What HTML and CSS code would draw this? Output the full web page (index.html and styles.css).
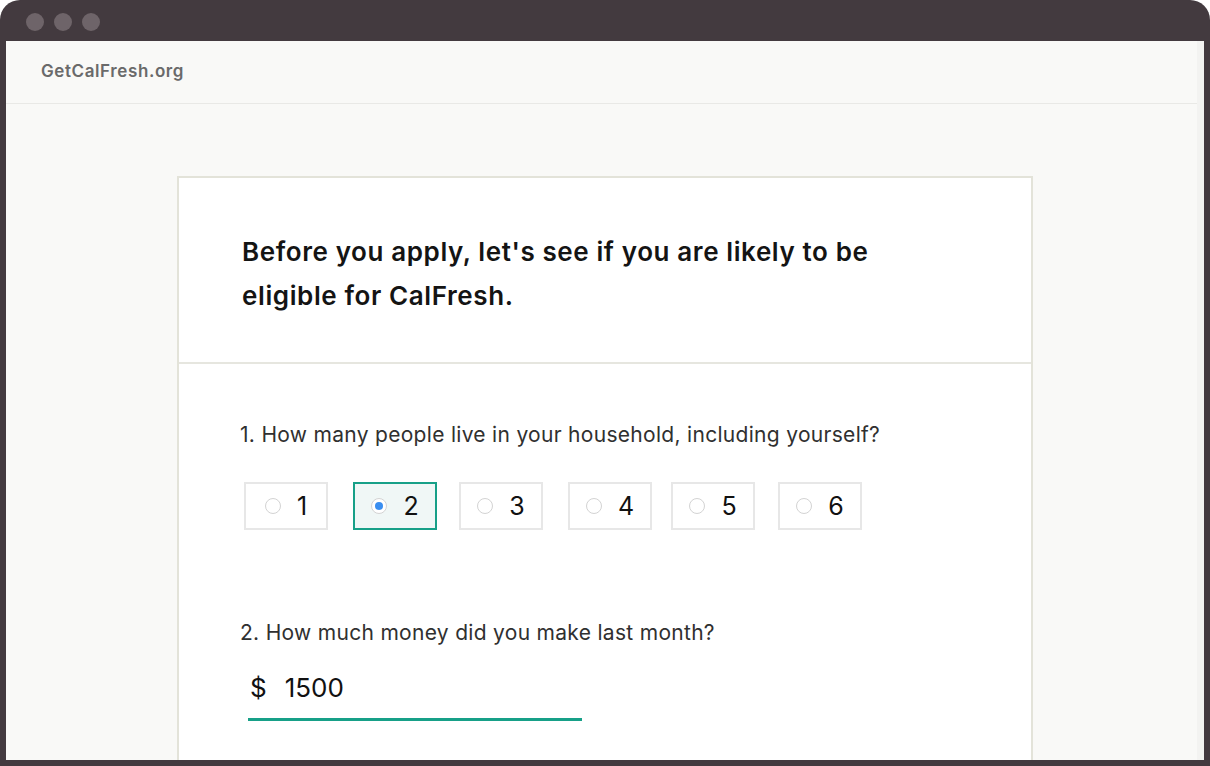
FILE: index.html
```html
<!DOCTYPE html>
<html>
<head>
<meta charset="utf-8">
<link rel="stylesheet" href="styles.css">
</head>
<body>
<div class="window">
  <div class="titlebar">
    <span class="dot"></span><span class="dot"></span><span class="dot"></span>
  </div>
  <div class="viewport">
    <div class="page">
      <header class="site-header">GetCalFresh.org</header>
      <main class="card">
        <div class="card-head">
          <h1>Before you apply, let's see if you are likely to be eligible for CalFresh.</h1>
        </div>
        <div class="card-body">
          <p class="question q1">1. How many people live in your household, including yourself?</p>
          <div class="options">
            <label class="opt"><span class="radio"></span><span class="num">1</span></label>
            <label class="opt selected"><span class="radio"></span><span class="num">2</span></label>
            <label class="opt"><span class="radio"></span><span class="num">3</span></label>
            <label class="opt"><span class="radio"></span><span class="num">4</span></label>
            <label class="opt"><span class="radio"></span><span class="num">5</span></label>
            <label class="opt"><span class="radio"></span><span class="num">6</span></label>
          </div>
          <p class="question q2">2. How much money did you make last month?</p>
          <div class="money">
            <span class="cur">$</span><span class="amt">1500</span>
          </div>
        </div>
      </main>
    </div>
    <div class="scrollbar"></div>
  </div>
</div>
</body>
</html>
```

FILE: styles.css
```css
html, body {
  margin: 0;
  padding: 0;
  background: #ffffff;
}
body {
  width: 1210px;
  height: 766px;
  overflow: hidden;
  font-family: "Inter", "Liberation Sans", Arial, sans-serif;
}
.window {
  width: 1210px;
  height: 766px;
  box-sizing: border-box;
  background: #433a3f;
  border-radius: 20px 20px 0 0;
  padding: 0 6px 6px 6px;
  display: flex;
  flex-direction: column;
}
.titlebar {
  height: 41px;
  flex: none;
  display: flex;
  align-items: center;
  gap: 10px;
  padding-left: 20px;
  padding-top: 2px;
  box-sizing: border-box;
}
.dot {
  width: 18px;
  height: 18px;
  border-radius: 50%;
  background: #6e6469;
}
.viewport {
  flex: 1;
  background: #f9f9f7;
  display: flex;
  overflow: hidden;
}
.page {
  flex: 1;
  display: flex;
  flex-direction: column;
}
.scrollbar {
  width: 7px;
  flex: none;
  background: #f3f3f1;
}
.site-header {
  height: 63px;
  box-sizing: border-box;
  border-bottom: 1px solid #e9e9e6;
  padding-left: 35px;
  display: flex;
  align-items: center;
  font-size: 17px;
  font-weight: 600;
  letter-spacing: 0.6px;
  color: #6a6a6a;
  padding-bottom: 2px;
}
.card {
  margin: 72px 0 0 171px;
  width: 856px;
  box-sizing: border-box;
  background: #ffffff;
  border: 2px solid #e3e3d9;
  border-bottom: none;
  flex: 1;
}
.card-head {
  padding: 52px 60px 44px 63px;
  border-bottom: 2px solid #e6e6df;
}
.card-head h1 {
  margin: 0;
  font-size: 26px;
  line-height: 44px;
  font-weight: 600;
  letter-spacing: 0.6px;
  color: #141414;
  max-width: 680px;
}
.card-body {
  padding: 56px 40px 0 61px;
}
.question {
  margin: 0;
  font-size: 21px;
  line-height: 30px;
  color: #303030;
  letter-spacing: 0.3px;
}
.options {
  display: flex;
  margin: 32px 0 0 4px;
}
.opt {
  width: 84px;
  height: 48px;
  box-sizing: border-box;
  border: 2px solid #e7e7e7;
  display: flex;
  align-items: center;
  justify-content: center;
  gap: 16px;
  background: #ffffff;
}
.opt:nth-child(2) { margin-left: 25px; }
.opt:nth-child(3) { margin-left: 22px; }
.opt:nth-child(4) { margin-left: 25px; }
.opt:nth-child(5) { margin-left: 19px; }
.opt:nth-child(6) { margin-left: 23px; }
.opt.selected {
  border-color: #17a088;
  background: #f0f7f6;
}
.radio {
  width: 16px;
  height: 16px;
  box-sizing: border-box;
  border: 1px solid #d3d3d3;
  border-radius: 50%;
  background: #ffffff;
  display: flex;
  align-items: center;
  justify-content: center;
}
.opt.selected .radio::after {
  content: "";
  width: 8px;
  height: 8px;
  border-radius: 50%;
  background: #3a8ef0;
}
.num {
  font-size: 25px;
  line-height: 30px;
  color: #111111;
}
.q2 {
  margin-top: 88px;
}
.money {
  margin: 23px 0 0 8px;
  width: 334px;
  height: 50px;
  box-sizing: border-box;
  border-bottom: 3px solid #17a088;
  display: flex;
  align-items: flex-start;
  padding-left: 2px;
  font-size: 26px;
  line-height: 34px;
  color: #111111;
}
.amt {
  margin-left: 18px;
}
```
